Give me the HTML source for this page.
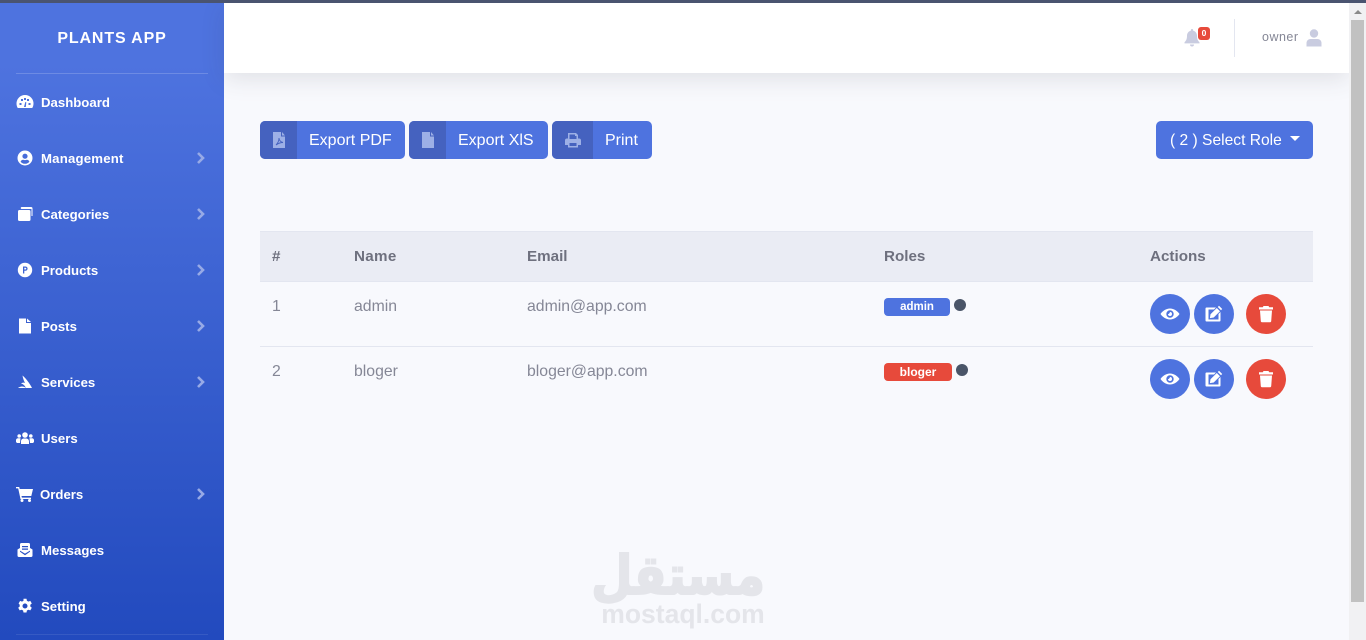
<!DOCTYPE html>
<html><head><meta charset="utf-8"><style>
*{box-sizing:border-box;margin:0;padding:0}
html,body{width:1366px;height:640px;overflow:hidden;background:#f8f9fd;font-family:"Liberation Sans",sans-serif}
.a{position:absolute;white-space:nowrap}
#top{left:0;top:0;width:1366px;height:3px;background:#4a5470;z-index:9}
#side{left:0;top:0;width:224px;height:640px;background:linear-gradient(180deg,#4e73df 10%,#224abe 100%)}
.hr{position:absolute;left:16px;width:192px;height:1px;background:rgba(255,255,255,.18)}
.m{position:absolute;left:41px;color:#fff;font-weight:700;font-size:13.2px;line-height:16px;transform:translateY(1px)}
.ic{position:absolute;left:16px;width:18px;height:18px;fill:#fff;transform:translateY(-1px)}
.ch{position:absolute;left:196px;width:9px;height:12px;fill:none;stroke:#97aae6;stroke-width:2.6}
#nav{left:224px;top:3px;width:1125px;height:70px;background:#fff;box-shadow:0 6px 24px rgba(58,59,69,.13)}
.b{position:absolute;top:121px;height:38px;background:#4e73df;border-radius:5px;color:#fff;font-size:16px;line-height:39px;overflow:hidden}
.b i{position:absolute;left:0;top:0;width:37px;height:38px;background:#4562bf}
.b span{position:absolute;top:0}
.b svg{position:absolute;left:12px;top:10px;width:14px;height:18px;fill:#9db0e6}
.th{position:absolute;top:248px;font-size:15.2px;font-weight:700;color:#6e707e;line-height:18px}
.td{position:absolute;font-size:15.8px;color:#858796;line-height:18px;transform:translateY(1px)}
.tag{position:absolute;height:18px;border-radius:4px;color:#fff;font-size:11.5px;font-weight:700;text-align:center;line-height:18px}
.dot{position:absolute;width:12px;height:12px;border-radius:50%;background:#4a5568}
.c{position:absolute;width:40px;height:40px;border-radius:50%;background:#4e73df}
.c.r{background:#e74a3b}
.c svg{position:absolute;left:10px;top:10px;width:20px;height:20px;fill:#fff}
</style></head><body>
<div class="a" id="top"></div>
<div class="a" id="side">
<div class="a" style="left:0;width:224px;top:30px;text-align:center;color:#fff;font-weight:700;font-size:16px;line-height:18px;letter-spacing:.85px">PLANTS APP</div>
<div class="hr" style="top:73px"></div>
<div class="hr" style="top:634px;opacity:.5"></div>

<svg class="ic" style="top:94px" viewBox="0 0 18 18"><path d="M9 2a8.500 8.500 0 0 0-8.500 8.500c0 1.800.5 3.400 1.300 4.500h14.400c.8-1.100 1.300-2.700 1.300-4.500A8.500 8.500 0 0 0 9 2zM8 5h2v2H8zM3.500 10h2v2h-2zM12.500 10h2v2h-2zM5 6h2v2H5zM11 6h2v2h-2zM8 14l1.300-5 1 .3L9.800 14z" fill-rule="evenodd"/></svg>
<div class="m" style="top:94px">Dashboard</div>

<svg class="ic" style="top:150px" viewBox="0 0 18 18"><path fill-rule="evenodd" d="M9 1.500a7.500 7.500 0 1 0 0 15 7.500 7.500 0 0 0 0-15zM9 4.600a2.600 2.600 0 1 1 0 5.200 2.600 2.600 0 0 1 0-5.200zM9 14.800c-1.800 0-3.400-.8-4.400-2.100.4-1.200 1.500-1.900 2.600-1.900.6.200 1.200.3 1.800.3s1.200-.1 1.800-.3c1.100 0 2.200.7 2.600 1.900-1 1.300-2.600 2.100-4.400 2.100z"/></svg>
<div class="m" style="top:150px;letter-spacing:.2px">Management</div>
<svg class="ch" style="top:152px" viewBox="0 0 9 12"><path d="M2 1l5 5-5 5"/></svg>

<svg class="ic" style="top:206px" viewBox="0 0 18 18"><path d="M6 2h9a1.500 1.500 0 0 1 1.500 1.500V11h-1V4H5.500A1 1 0 0 1 6 2zM3.500 5h9.500A1.500 1.500 0 0 1 14.500 6.500v8A1.500 1.500 0 0 1 13 16H3.500A1.500 1.500 0 0 1 2 14.500v-8A1.500 1.500 0 0 1 3.500 5z"/></svg>
<div class="m" style="top:206px">Categories</div>
<svg class="ch" style="top:208px" viewBox="0 0 9 12"><path d="M2 1l5 5-5 5"/></svg>

<svg class="ic" style="top:262px" viewBox="0 0 18 18"><path fill-rule="evenodd" d="M9 1.800a7.200 7.200 0 1 0 0 14.400A7.200 7.200 0 0 0 9 1.800zM7 5.500h2.500a2.100 2.100 0 0 1 0 4.200H8.300v2.800H7zM8.300 6.700v1.800h1.100a.9.900 0 0 0 0-1.800z"/></svg>
<div class="m" style="top:262px">Products</div>
<svg class="ch" style="top:264px" viewBox="0 0 9 12"><path d="M2 1l5 5-5 5"/></svg>

<svg class="ic" style="top:318px" viewBox="0 0 18 18"><path d="M3 1.500h7v4.500h5v10.500H3zM11 1.500l4 3.500h-4z"/></svg>
<div class="m" style="top:318px">Posts</div>
<svg class="ch" style="top:320px" viewBox="0 0 9 12"><path d="M2 1l5 5-5 5"/></svg>

<svg class="ic" style="top:374px" viewBox="0 0 18 18"><path d="M6.500 2.500c3 2.500 7 7.500 9.500 12.500H2c1-.8 2.500-1.500 4-1.500 1.500 0 3 .6 4 1.500-1.500-3-3-4-5-4.500 1.500-1 3-1 4-.5C8 8 7 5.500 6.500 2.500z"/></svg>
<div class="m" style="top:374px">Services</div>
<svg class="ch" style="top:376px" viewBox="0 0 9 12"><path d="M2 1l5 5-5 5"/></svg>

<svg class="ic" style="top:430px" viewBox="0 0 18 18"><circle cx="3.200" cy="7" r="1.800"/><circle cx="14.800" cy="7" r="1.800"/><circle cx="9" cy="6" r="2.800"/><path d="M0 13v-2c0-1 1-1.800 2-1.800h2.500L4 14H1zM18 13v-2c0-1-1-1.800-2-1.800h-2.500L14 14h3zM5 15v-2.500C5 10.500 6.300 9.500 8 9.500h2c1.700 0 3 1 3 3V15z"/></svg>
<div class="m" style="top:430px">Users</div>

<svg class="ic" style="top:486px" viewBox="0 0 18 18"><path d="M0 2h3.200l.5 2H17l-1.700 7H5.500l.4 1.600H15v1.400H4.500L2.200 3.400H0z"/><circle cx="6" cy="15.500" r="1.500"/><circle cx="13.500" cy="15.500" r="1.500"/></svg>
<div class="m" style="top:486px;left:40px">Orders</div>
<svg class="ch" style="top:488px" viewBox="0 0 9 12"><path d="M2 1l5 5-5 5"/></svg>

<svg class="ic" style="top:542px" viewBox="0 0 18 18"><path fill-rule="evenodd" d="M4 7V3.500A1.500 1.500 0 0 1 5.500 2h7A1.500 1.500 0 0 1 14 3.500V7l2.500 1.500v6A1.500 1.500 0 0 1 15 16H3a1.500 1.500 0 0 1-1.500-1.500v-6zM6 5v1.200h6V5zM6 7.500v1.200h6V7.500zM4 9.600l5 3 5-3v1.200l-5 3.400-5-3.400z"/></svg>
<div class="m" style="top:542px">Messages</div>

<svg class="ic" style="top:598px" viewBox="0 0 18 18"><path fill-rule="evenodd" d="M7.500 1.800h3l.4 2 1.500.8 1.900-.7 1.500 2.600-1.500 1.300v1.700l1.500 1.300-1.500 2.600-1.900-.7-1.500.8-.4 2h-3l-.4-2-1.500-.8-1.900.7-1.500-2.600 1.500-1.300V7.800L2.600 6.500l1.500-2.600 1.900.7 1.500-.8zM9 6.500a2.300 2.300 0 1 0 0 5 2.300 2.300 0 0 0 0-5z"/></svg>
<div class="m" style="top:598px">Setting</div>
</div>

<div class="a" id="nav"></div>
<svg class="a" style="left:1184px;top:29px;width:16px;height:18px;fill:#c9cce0" viewBox="0 0 16 18"><path d="M8 0a1.200 1.200 0 0 1 1.200 1.200v.6C11.500 2.400 13 4.300 13 6.800c0 4 1.200 5 2.500 6.600v1H.5v-1C1.800 11.800 3 10.800 3 6.800 3 4.300 4.500 2.400 6.800 1.800v-.6A1.200 1.200 0 0 1 8 0zM6 15.500h4a2 2 0 0 1-4 0z"/></svg>
<div class="a" style="left:1198px;top:27px;width:12px;height:13px;background:#e74a3b;border-radius:3px;color:#fff;font-size:8.500px;font-weight:700;text-align:center;line-height:13px">0</div>
<div class="a" style="left:1234px;top:19px;width:1px;height:38px;background:#e3e6f0"></div>
<div class="a" style="left:1262px;top:29px;font-size:12.500px;color:#858796;line-height:16px;letter-spacing:.5px">owner</div>
<svg class="a" style="left:1306px;top:29px;width:16px;height:18px;fill:#c9cce0" viewBox="0 0 16 18"><circle cx="8" cy="4.500" r="4.200"/><path d="M.5 17.500v-3.500c0-2.500 2-4 4-4h7c2 0 4 1.500 4 4v3.500z"/></svg>

<div class="b" style="left:260px;width:145px"><i><svg viewBox="0 0 14 18"><path d="M1 1h8v4.500h4V17H1zM10 1l3 3.500h-3z"/><path d="M4 14c2-2 3-5 3-7 0 2 1.500 4 4 4.500-2.500 0-5 1-7 2.500z" fill="none" stroke="#4562bf" stroke-width=".9"/></svg></i><span style="left:49px">Export PDF</span></div>
<div class="b" style="left:409px;width:139px"><i><svg viewBox="0 0 14 18"><path d="M1 1h8v4.500h4V17H1zM10 1l3 3.500h-3z"/></svg></i><span style="left:49px">Export XlS</span></div>
<div class="b" style="left:552px;width:100px"><i style="width:41px"><svg style="left:13px;top:10px;width:16px" viewBox="0 0 16 18"><path fill-rule="evenodd" d="M3 2h8l2 2v3.500h1a2 2 0 0 1 2 2V14h-3v2.500H3V14H0V9.500a2 2 0 0 1 2-2h1zM4.500 3.500V8h7V5h-1.500V3.500zM4.500 12v3h7v-3z"/></svg></i><span style="left:53px">Print</span></div>
<div class="b" style="left:1156px;width:157px"><span style="left:14px;font-size:15.6px">( 2 ) Select Role</span><div class="a" style="left:134px;top:15px;width:0;height:0;border-left:5px solid transparent;border-right:5px solid transparent;border-top:5px solid #fff"></div></div>

<div class="a" style="left:260px;top:231px;width:1053px;height:51px;background:#eaecf4;border-top:1px solid #e3e6f0;border-bottom:1px solid #e3e6f0"></div>
<div class="a" style="left:260px;top:346px;width:1053px;height:1px;background:#e3e6f0"></div>
<div class="th" style="left:272px">#</div>
<div class="th" style="left:354px;letter-spacing:.3px">Name</div>
<div class="th" style="left:527px">Email</div>
<div class="th" style="left:884px">Roles</div>
<div class="th" style="left:1150px">Actions</div>

<div class="td" style="left:272px;top:297px">1</div>
<div class="td" style="left:354px;top:297px">admin</div>
<div class="td" style="left:527px;top:297px">admin@app.com</div>
<div class="tag" style="left:884px;top:298px;width:66px;background:#4e73df">admin</div>
<div class="dot" style="left:954px;top:299px"></div>

<div class="td" style="left:272px;top:362px">2</div>
<div class="td" style="left:354px;top:362px">bloger</div>
<div class="td" style="left:527px;top:362px">bloger@app.com</div>
<div class="tag" style="left:884px;top:363px;width:68px;background:#e74a3b;font-size:12px">bloger</div>
<div class="dot" style="left:956px;top:364px"></div>

<div class="c" style="left:1150px;top:294px"><svg viewBox="0 0 20 20"><path fill-rule="evenodd" d="M10 4.500c4 0 7.500 2.600 9.500 5.500-2 2.900-5.500 5.500-9.500 5.500S2.500 12.900.5 10C2.500 7.100 6 4.500 10 4.500zM10 6.300a3.700 3.700 0 1 0 0 7.400 3.700 3.700 0 0 0 0-7.400zM10 8a2 2 0 1 1-2 2c.8.300 1.700-.8 2-2z"/></svg></div>
<div class="c" style="left:1194px;top:294px"><svg viewBox="0 0 20 20"><path d="M2.500 3.500h9.500l-2 2H4.500v10h10V10l2-2v8.500a1 1 0 0 1-1 1h-13a1 1 0 0 1-1-1v-12a1 1 0 0 1 1-1zM15 1.800l3.200 3.200-1.200 1.200-3.200-3.200zM12.800 4l3.200 3.200-6.300 6.300-3.800.6.600-3.800z"/></svg></div>
<div class="c r" style="left:1246px;top:294px"><svg viewBox="0 0 20 20"><path d="M7.500 2h5l.7 1.300h3.800V5.500H3V3.300h3.800zM4 6.500h12l-.8 10.800a1 1 0 0 1-1 .9H5.800a1 1 0 0 1-1-.9z"/></svg></div>

<div class="c" style="left:1150px;top:359px"><svg viewBox="0 0 20 20"><path fill-rule="evenodd" d="M10 4.500c4 0 7.500 2.600 9.500 5.500-2 2.900-5.500 5.500-9.500 5.500S2.500 12.900.5 10C2.500 7.100 6 4.500 10 4.500zM10 6.300a3.700 3.700 0 1 0 0 7.400 3.700 3.700 0 0 0 0-7.400zM10 8a2 2 0 1 1-2 2c.8.300 1.700-.8 2-2z"/></svg></div>
<div class="c" style="left:1194px;top:359px"><svg viewBox="0 0 20 20"><path d="M2.500 3.500h9.500l-2 2H4.500v10h10V10l2-2v8.500a1 1 0 0 1-1 1h-13a1 1 0 0 1-1-1v-12a1 1 0 0 1 1-1zM15 1.800l3.200 3.200-1.200 1.200-3.200-3.200zM12.800 4l3.200 3.200-6.300 6.300-3.800.6.600-3.800z"/></svg></div>
<div class="c r" style="left:1246px;top:359px"><svg viewBox="0 0 20 20"><path d="M7.500 2h5l.7 1.300h3.800V5.500H3V3.300h3.800zM4 6.500h12l-.8 10.800a1 1 0 0 1-1 .9H5.800a1 1 0 0 1-1-.9z"/></svg></div>

<div class="a" style="left:560px;top:541px;width:205px;text-align:right;font-family:'DejaVu Sans',sans-serif;font-weight:700;font-size:54px;line-height:70px;color:#e4e5ea;-webkit-text-stroke:2px #e4e5ea;transform:scaleX(.88);transform-origin:right center" dir="rtl">مستقل</div>
<div class="a" style="left:600px;top:599px;width:166px;text-align:center;font-weight:700;font-size:26.500px;line-height:30px;color:#e4e5ea">mostaql.com</div>

<div class="a" style="left:1349px;top:3px;width:17px;height:637px;background:#f1f1f3"></div>
<div class="a" style="left:1351px;top:20px;width:13px;height:582px;background:#c1c1c1"></div>
<div class="a" style="left:1354px;top:10px;width:0;height:0;border-left:4px solid transparent;border-right:4px solid transparent;border-bottom:4px solid #8a8a8a"></div>
</body></html>
